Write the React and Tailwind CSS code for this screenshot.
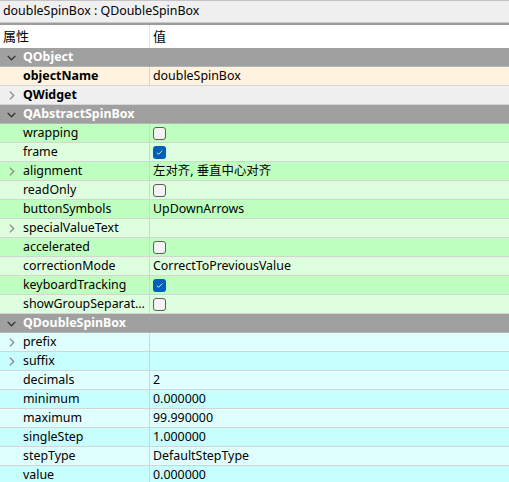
import { useState } from "react";

const groups = [
  {
    name: "QObject",
    dark: "bg-[#ffe6bf]",
    light: "bg-[#fff2de]",
    start: 1,
    rows: [{ name: "objectName", value: "doubleSpinBox", bold: true }],
  },
  { name: "QWidget", collapsed: true },
  {
    name: "QAbstractSpinBox",
    dark: "bg-[#bfffbf]",
    light: "bg-[#deffde]",
    start: 0,
    rows: [
      { name: "wrapping", check: false },
      { name: "frame", check: true },
      { name: "alignment", value: "左对齐, 垂直中心对齐", expand: true },
      { name: "readOnly", check: false },
      { name: "buttonSymbols", value: "UpDownArrows" },
      { name: "specialValueText", value: "", expand: true },
      { name: "accelerated", check: false },
      { name: "correctionMode", value: "CorrectToPreviousValue" },
      { name: "keyboardTracking", check: true },
      { name: "showGroupSeparat...", check: false },
    ],
  },
  {
    name: "QDoubleSpinBox",
    dark: "bg-[#c7ffff]",
    light: "bg-[#dfffff]",
    start: 1,
    rows: [
      { name: "prefix", value: "", expand: true },
      { name: "suffix", value: "", expand: true },
      { name: "decimals", value: "2" },
      { name: "minimum", value: "0.000000" },
      { name: "maximum", value: "99.990000" },
      { name: "singleStep", value: "1.000000" },
      { name: "stepType", value: "DefaultStepType" },
      { name: "value", value: "0.000000" },
    ],
  },
];

function Chevron({ down, className }) {
  return (
    <svg width="11" height="11" viewBox="0 0 10 10" className={className}>
      {down ? (
        <path d="M1.5 3.5 L5 7 L8.5 3.5" fill="none" stroke="currentColor" strokeWidth="1.2" />
      ) : (
        <path d="M3.5 1.5 L7 5 L3.5 8.5" fill="none" stroke="currentColor" strokeWidth="1.2" />
      )}
    </svg>
  );
}

function CheckBox({ checked }) {
  if (checked) {
    return (
      <span className="w-[13px] h-[13px] rounded-[3px] bg-[#005fb8] flex items-center justify-center">
        <svg width="9" height="9" viewBox="0 0 9 9">
          <path d="M1.8 4.6 L3.7 6.3 L7.3 2.6" fill="none" stroke="#dbe8f5" strokeWidth="1" />
        </svg>
      </span>
    );
  }
  return <span className="w-[13px] h-[13px] rounded-[3px] border border-[#5c5c5c] bg-[#f3f3f3]" />;
}

function GroupRow({ name, collapsed }) {
  if (collapsed) {
    return (
      <div className="h-[19px] flex items-center bg-[#f0f0f0] border-b border-[#d6d6d6]">
        <div className="w-[23px] flex justify-center text-[#8a8a8a]">
          <Chevron />
        </div>
        <span className="font-bold text-black">{name}</span>
      </div>
    );
  }
  return (
    <div className="h-[19px] flex items-center bg-[#a0a0a0] border-b border-[#b4b4b4]">
      <div className="w-[23px] flex justify-center text-[#333333]">
        <Chevron down />
      </div>
      <span className="font-bold text-white">{name}</span>
    </div>
  );
}

function PropRow({ row, bg }) {
  return (
    <div className={`h-[19px] flex border-b border-[#d4d4d4] ${bg}`}>
      <div className="w-[149px] flex items-center shrink-0">
        <div className="w-[23px] flex justify-center text-[#8a8a8a]">{row.expand && <Chevron />}</div>
        <span className={row.bold ? "font-bold text-black" : "text-black"}>{row.name}</span>
      </div>
      <div className="w-px bg-[#d4d4d4]" />
      <div className="flex-1 flex items-center pl-[3px] text-black whitespace-nowrap overflow-hidden">
        {row.check !== undefined ? <CheckBox checked={row.check} /> : row.value}
      </div>
    </div>
  );
}

export default function App() {
  const [title] = useState("doubleSpinBox : QDoubleSpinBox");

  return (
    <div
      className="w-[509px] h-[482px] overflow-hidden bg-white text-[12.4px] leading-none"
      style={{ fontFamily: '"Noto Sans", "Noto Sans CJK SC", sans-serif' }}
    >
      <div className="h-[22px] flex items-center px-[3px] bg-[#f0f0f0] border-t border-[#c4c4c4] text-black">
        {title}
      </div>
      <div className="h-px bg-[#c8c8c8]" />
      <div className="h-[2px] bg-[#9c9c9c]" />
      <div className="h-[23px] flex bg-white text-[13px]">
        <div className="w-[149px] flex items-center pl-[3px] text-black">属性</div>
        <div className="w-px bg-[#e5e5e5]" />
        <div className="flex-1 flex items-center pl-[3px] text-black">值</div>
      </div>
      {groups.map((g) => (
        <div key={g.name}>
          <GroupRow name={g.name} collapsed={g.collapsed} />
          {!g.collapsed &&
            g.rows.map((r, i) => (
              <PropRow key={r.name} row={r} bg={(i + g.start) % 2 === 0 ? g.dark : g.light} />
            ))}
        </div>
      ))}
    </div>
  );
}
